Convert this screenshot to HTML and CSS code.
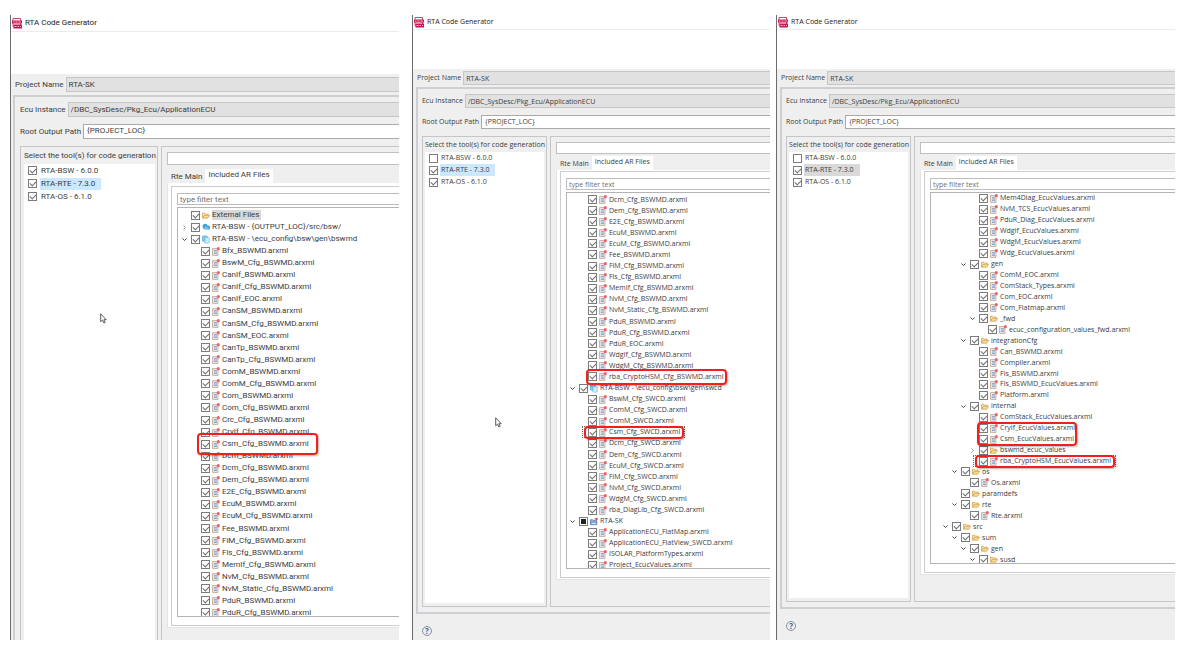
FILE: index.html
```html
<!DOCTYPE html>
<html lang="en">
<head>
<meta charset="utf-8">
<title>RTA Code Generator</title>
<link rel="stylesheet" href="styles.css">
</head>
<body>
<svg class="sprite" aria-hidden="true">
  <symbol id="app" viewBox="0 0 10 11"><path d="M1 .500h7.500v8h-7.500z" fill="#fff" stroke="#c9446f"/><path d="M0 2.500h10v3h-10zM1.500 6.500h8.500v4h-8.500z" fill="#c2184f"/><path d="M1 4h1.500M3.500 4h2M6.500 4h2.500M2.500 8.500h2M5.500 8.500h1.500M8 8.500h1" stroke="#f7cfdc" stroke-width=".9"/></symbol>
  <symbol id="file" viewBox="0 0 8 9"><path d="M.5 1.500h5.500v7h-5.500z" fill="#dfe3ec" stroke="#c4ab8c" stroke-width=".8"/><path d="M2 3.500h3M2 5h3M2 6.500h3" stroke="#7f9bcb" stroke-width=".8"/><path d="M4.500 4l2.500-3" stroke="#e99" stroke-width="1"/><circle cx="6.300" cy="1.700" r="1.600" fill="#f4606a"/></symbol>
  <symbol id="folder" viewBox="0 0 9 9"><path d="M.5 7.500v-5.500h2.500l1 1h3v1.500" fill="#f8e2ae" stroke="#d19a45" stroke-width=".8"/><path d="M.7 7.500l1.800-3.200h6l-2 3.200z" fill="#fbdc90" stroke="#d19a45" stroke-width=".8"/></symbol>
  <symbol id="cloud" viewBox="0 0 9 9"><path d="M.8 4a2.800 2.800 0 0 1 5.400-1.600a2.300 2.300 0 0 1 1.800 4.400h-4.500a3 3 0 0 1-2.700-2.800z" fill="#3ea2dc"/><path d="M2.500 5h5M4 3.500l1 3" stroke="#bfe4f7" stroke-width=".7"/></symbol>
  <symbol id="stack" viewBox="0 0 9 9"><rect x=".5" y=".5" width="5.500" height="6" rx="1" fill="#8fcbee" stroke="#45a7dd" stroke-width=".7"/><rect x="3" y="2.500" width="5.200" height="6" rx="1" fill="#d7effb" stroke="#5bb3e2" stroke-width=".7"/><path d="M1.500 2l3 4" stroke="#45a7dd" stroke-width=".7"/></symbol>
  <symbol id="project" viewBox="0 0 9 9"><path d="M.5 8v-5.500h2.500l1 1h3.500v4.500z" fill="#8fb4e6" stroke="#3d6cb5" stroke-width=".8"/><path d="M1.500 5.500h6.500l-1 2.500h-6z" fill="#dce9fa" stroke="#3d6cb5" stroke-width=".6"/><path d="M4 1.500h2" stroke="#e0a040"/><circle cx="7.300" cy="1.700" r="1.500" fill="#f0505a"/></symbol>
  <symbol id="open" viewBox="0 0 7 7"><path d="M1.500 2.500l2 2l2-2" fill="none" stroke="#444" stroke-width="1"/></symbol>
  <symbol id="closed" viewBox="0 0 7 7"><path d="M2.500 1.500l2 2l-2 2" fill="none" stroke="#999" stroke-width="1"/></symbol>
  <symbol id="pointer" viewBox="0 0 7 11"><path d="M.7.800v8l1.900-1.700l1.300 2.900l1.300-.6l-1.300-2.700h2.300z" fill="#fff" stroke="#334" stroke-width=".8"/></symbol>
</svg>

<main class="desk">
  <section class="window window-a">
    <header class="title"><svg><use href="#app"/></svg><h1>RTA Code Generator</h1></header>
    <div class="banner"></div>
    <div class="form">
      <div class="field project"><label for="a-project">Project Name</label><input id="a-project" type="text" value="RTA-SK" readonly></div>
      <div class="box">
        <div class="field"><label for="a-ecu">Ecu Instance</label><input id="a-ecu" type="text" value="/DBC_SysDesc/Pkg_Ecu/ApplicationECU" readonly></div>
        <div class="field root"><label for="a-root">Root Output Path</label><input id="a-root" type="text" value="{PROJECT_LOC}"></div>
        <div class="columns">
          <div class="group tools">
            <h2>Select the tool(s) for code generation</h2>
            <ul class="tool-list">
              <li><label><input type="checkbox" checked><span>RTA-BSW - 6.0.0</span></label></li>
              <li><label><input type="checkbox" checked><span class="active">RTA-RTE - 7.3.0</span></label></li>
              <li><label><input type="checkbox" checked><span>RTA-OS - 6.1.0</span></label></li>
            </ul>
          </div>
          <div class="group settings">
            <input class="message" type="text" aria-label="Message" readonly>
            <div class="tabs"><button type="button">Rte Main</button><button type="button" class="selected">Included AR Files</button></div>
            <div class="page"><div class="page-inner">
              <input class="filter" type="text" placeholder="type filter text" aria-label="Filter">
              <div class="tree-frame"><ul class="tree" id="tree-a"></ul></div>
            </div></div>
          </div>
        </div>
      </div>
    </div>
    <svg class="pointer"><use href="#pointer"/></svg>
  </section>

  <section class="window window-b">
    <header class="title"><svg><use href="#app"/></svg><h1>RTA Code Generator</h1></header>
    <div class="banner"></div>
    <div class="form">
      <div class="field project"><label for="b-project">Project Name</label><input id="b-project" type="text" value="RTA-SK" readonly></div>
      <div class="box">
        <div class="field"><label for="b-ecu">Ecu Instance</label><input id="b-ecu" type="text" value="/DBC_SysDesc/Pkg_Ecu/ApplicationECU" readonly></div>
        <div class="field root"><label for="b-root">Root Output Path</label><input id="b-root" type="text" value="{PROJECT_LOC}"></div>
        <div class="columns">
          <div class="group tools">
            <h2>Select the tool(s) for code generation</h2>
            <ul class="tool-list">
              <li><label><input type="checkbox"><span>RTA-BSW - 6.0.0</span></label></li>
              <li><label><input type="checkbox" checked><span class="active">RTA-RTE - 7.3.0</span></label></li>
              <li><label><input type="checkbox" checked><span>RTA-OS - 6.1.0</span></label></li>
            </ul>
          </div>
          <div class="group settings">
            <input class="message" type="text" aria-label="Message" readonly>
            <div class="tabs"><button type="button">Rte Main</button><button type="button" class="selected">Included AR Files</button></div>
            <div class="page"><div class="page-inner">
              <input class="filter" type="text" placeholder="type filter text" aria-label="Filter">
              <div class="tree-frame"><ul class="tree" id="tree-b"></ul></div>
            </div></div>
          </div>
        </div>
      </div>
      <div class="footer"><button type="button" class="help" aria-label="Help">?</button></div>
    </div>
    <svg class="pointer"><use href="#pointer"/></svg>
  </section>

  <section class="window window-c">
    <header class="title"><svg><use href="#app"/></svg><h1>RTA Code Generator</h1></header>
    <div class="banner"></div>
    <div class="form">
      <div class="field project"><label for="c-project">Project Name</label><input id="c-project" type="text" value="RTA-SK" readonly></div>
      <div class="box">
        <div class="field"><label for="c-ecu">Ecu Instance</label><input id="c-ecu" type="text" value="/DBC_SysDesc/Pkg_Ecu/ApplicationECU" readonly></div>
        <div class="field root"><label for="c-root">Root Output Path</label><input id="c-root" type="text" value="{PROJECT_LOC}"></div>
        <div class="columns">
          <div class="group tools">
            <h2>Select the tool(s) for code generation</h2>
            <ul class="tool-list">
              <li><label><input type="checkbox"><span>RTA-BSW - 6.0.0</span></label></li>
              <li><label><input type="checkbox" checked><span class="active">RTA-RTE - 7.3.0</span></label></li>
              <li><label><input type="checkbox" checked><span>RTA-OS - 6.1.0</span></label></li>
            </ul>
          </div>
          <div class="group settings">
            <input class="message" type="text" aria-label="Message" readonly>
            <div class="tabs"><button type="button">Rte Main</button><button type="button" class="selected">Included AR Files</button></div>
            <div class="page"><div class="page-inner">
              <input class="filter" type="text" placeholder="type filter text" aria-label="Filter">
              <div class="tree-frame"><ul class="tree" id="tree-c"></ul></div>
            </div></div>
          </div>
        </div>
      </div>
      <div class="footer"><button type="button" class="help" aria-label="Help">?</button></div>
    </div>
  </section>
</main>
<script src="tree.js"></script>
</body>
</html>
```

FILE: tree.js
```js
// Row notation: [depth, icon, flags, name].
// Flags: + expanded, > collapsed, # partly checked, g grey label,
//        ! callout, w wide callout, n slim callout, 2 callout over two rows, f focus.
const files = (depth, suffix, names) =>
  names.split(" ").map(name => [depth, "file", "", name + suffix + ".arxml"]);

const trees = {
  "tree-a": [
    [0, "folder", "g", "External Files"],
    [0, "cloud", ">", "RTA-BSW - {OUTPUT_LOC}/src/bsw/"],
    [0, "stack", "+", "RTA-BSW - \\ecu_config\\bsw\\gen\\bswmd"],
    ...files(1, "", "Bfx_BSWMD BswM_Cfg_BSWMD CanIf_BSWMD CanIf_Cfg_BSWMD CanIf_EOC CanSM_BSWMD CanSM_Cfg_BSWMD CanSM_EOC CanTp_BSWMD CanTp_Cfg_BSWMD ComM_BSWMD ComM_Cfg_BSWMD Com_BSWMD Com_Cfg_BSWMD Crc_Cfg_BSWMD CryIf_Cfg_BSWMD"),
    [1, "file", "w", "Csm_Cfg_BSWMD.arxml"],
    ...files(1, "_BSWMD", "Dcm Dcm_Cfg Dem_Cfg E2E_Cfg EcuM EcuM_Cfg Fee FiM_Cfg Fls_Cfg MemIf_Cfg NvM_Cfg NvM_Static_Cfg PduR PduR_Cfg")
  ],
  "tree-b": [
    ...files(1, "", "Dcm_Cfg_BSWMD Dem_Cfg_BSWMD E2E_Cfg_BSWMD EcuM_BSWMD EcuM_Cfg_BSWMD Fee_BSWMD FiM_Cfg_BSWMD Fls_Cfg_BSWMD MemIf_Cfg_BSWMD NvM_Cfg_BSWMD NvM_Static_Cfg_BSWMD PduR_BSWMD PduR_Cfg_BSWMD PduR_EOC WdgIf_Cfg_BSWMD WdgM_Cfg_BSWMD"),
    [1, "file", "!", "rba_CryptoHSM_Cfg_BSWMD.arxml"],
    [0, "stack", "+", "RTA-BSW - \\ecu_config\\bsw\\gen\\swcd"],
    ...files(1, "_SWCD", "BswM_Cfg ComM_Cfg ComM"),
    [1, "file", "nf", "Csm_Cfg_SWCD.arxml"],
    ...files(1, "_SWCD", "Dcm_Cfg Dem_Cfg EcuM_Cfg FiM_Cfg NvM_Cfg WdgM_Cfg rba_DiagLib_Cfg"),
    [0, "project", "+#", "RTA-SK"],
    ...files(1, "", "ApplicationECU_FlatMap ApplicationECU_FlatView_SWCD ISOLAR_PlatformTypes Project_EcucValues")
  ],
  "tree-c": [
    ...files(4, "_EcucValues", "Mem4Diag NvM_TCS PduR_Diag WdgIf WdgM Wdg"),
    [3, "folder", "+", "gen"],
    ...files(4, "", "ComM_EOC ComStack_Types Com_EOC Com_Flatmap"),
    [4, "folder", "+", "_fwd"],
    [5, "file", "", "ecuc_configuration_values_fwd.arxml"],
    [3, "folder", "+", "integrationCfg"],
    ...files(4, "", "Can_BSWMD Compiler Fls_BSWMD Fls_BSWMD_EcucValues Platform"),
    [3, "folder", "+", "internal"],
    [4, "file", "", "ComStack_EcucValues.arxml"],
    [4, "file", "2", "CryIf_EcucValues.arxml"],
    [4, "file", "", "Csm_EcucValues.arxml"],
    [4, "folder", ">", "bswmd_ecuc_values"],
    [4, "file", "nf", "rba_CryptoHSM_EcucValues.arxml"],
    [2, "folder", "+", "os"],
    [3, "file", "", "Os.arxml"],
    [2, "folder", "", "paramdefs"],
    [2, "folder", "+", "rte"],
    [3, "file", "", "Rte.arxml"],
    [1, "folder", "+", "src"],
    [2, "folder", "+", "sum"],
    [3, "folder", "+", "gen"],
    [4, "folder", "+", "susd"]
  ]
};

const callouts = { "!": "callout", w: "callout wide", n: "callout slim", 2: "callout double", f: "focus" };

function row([depth, icon, flags, name]) {
  const has = flag => flags.includes(flag);
  const arrow = has("+") ? "open" : has(">") ? "closed" : "";
  const twisty = arrow
    ? `<button type="button" class="twisty" aria-label="Toggle ${name}"><svg><use href="#${arrow}"/></svg></button>`
    : `<span class="twisty"></span>`;
  const marks = Object.keys(callouts).filter(has).map(f => `<i class="${callouts[f]}"></i>`).join("");
  return `<li class="depth-${depth}">${twisty}<label><input type="checkbox" ${has("#") ? 'class="partial"' : "checked"}>` +
    `<svg class="icon"><use href="#${icon}"/></svg><span${has("g") ? ' class="grey"' : ""}>${name}</span>${marks}</label></li>`;
}

for (const [id, rows] of Object.entries(trees)) {
  document.getElementById(id).innerHTML = rows.map(row).join("");
}
```

FILE: styles.css
```css
* { box-sizing: border-box; }
body, h1, h2, ul { margin: 0; padding: 0; font-weight: 400; }
ul { list-style: none; }
body {
  background: #fff;
  color: #3c3c3c;
  font-family: "Open Sans", "Noto Sans", sans-serif;
  font-size: 8px;
  line-height: 10px;
}
input, button { font: inherit; color: inherit; margin: 0; padding: 0; border: 0; border-radius: 0; }
button { background: none; }
h1, h2 { font-size: inherit; white-space: nowrap; }
.sprite { display: none; }

.desk { display: flex; height: 100vh; padding: 15px 24px 17px 10px; }
.window {
  --indent: 9px;
  position: relative;
  display: flex;
  flex-direction: column;
  min-width: 0;
  overflow: hidden;
  border-left: 1px solid #6c6c6c;
}
.window-a { --indent: 10px; flex: 389 1 0; margin-right: 13px; font-family: Roboto, "Open Sans", sans-serif; }
.window-b { flex: 358 1 0; margin-right: 6px; font-size: 7px; }
.window-c { flex: 399 1 0; font-size: 7px; }

.title { display: flex; align-items: center; gap: 3px; height: 15px; padding-left: 1px; border-bottom: 1px solid #ececec; color: #222; }
.title svg { width: 10px; height: 11px; }
.window-a .title { height: 17px; }
.banner { height: 39px; }
.window-a .banner { height: 42px; }

.form { display: flex; flex: 1; flex-direction: column; min-height: 0; background: #efefef; }
.field { display: flex; align-items: center; gap: 2px; white-space: nowrap; }
.field input { flex: 1; min-width: 0; height: 14px; padding: 0 2px; border: 1px solid #c6c6c6; border-right: 0; background: #e1e1e1; }
.window-a .field input { height: 15px; }
.project { padding: 2px 0 2px 4px; }
.window-a .project { padding: 3px 0 3px 4px; }
.root { margin-top: 7px; }
.field.root input { padding: 0 3px 2px; background: #fff; border-color: #aaa; }

.box { display: flex; flex: 1; flex-direction: column; min-height: 0; margin-left: 3px; padding: 5px 0 5px 4px; border: 2px solid #cfcfd3; border-right: 0; }
.window-a .box { padding-bottom: 0; border-bottom: 0; margin-left: 2px; padding-left: 5px; }
.columns { display: flex; flex: 1; gap: 3px; min-height: 0; margin-top: 7px; }
.group { border: 1px solid #c6c6c6; }
.tools { display: flex; flex: none; flex-direction: column; width: 125px; padding: 3px 2px 3px 2px; }
.tools h2 { height: 12px; }
.window-a .tools { width: 138px; padding: 4px 2px 0 3px; border-bottom: 0; }
.window-a .tools h2 { height: 13px; }
.tool-list { flex: 1; background: #fff; }
.tool-list label { display: flex; align-items: center; height: 12px; padding-left: 4px; gap: 2px; }
.window-a .tool-list label { height: 13px; gap: 3px; }
.tool-list span { padding: 0 6px 0 1px; line-height: 12px; }
.tool-list .active { background: #cce8ff; }
.window-c .tool-list .active { background: #d9d9d9; }

input[type="checkbox"] { appearance: none; flex: none; width: 9px; height: 9px; border: 1px solid #7c7c7c; background: #fff; }
input[type="checkbox"]:checked::before { content: ""; display: block; width: 5px; height: 3px; margin: 1px 0 0 1px; border: solid #707070; border-width: 0 0 1px 1px; transform: rotate(-45deg); }
input.partial::before { content: ""; display: block; width: 5px; height: 5px; margin: 1px; background: #222; }

.settings { display: flex; flex: 1; flex-direction: column; min-width: 0; padding: 5px 0 26px 5px; border-right: 0; }
.window-a .settings { padding-bottom: 12px; border-bottom: 0; }
.message { flex: none; height: 12px; border: 1px solid #c0c0c0; border-right: 0; background: #fff; }
.window-a .message { height: 13px; }
.tabs { display: flex; align-items: flex-end; height: 16px; padding-left: 1px; }
.window-a .tabs { height: 18px; }
.tabs button { height: 12px; padding: 0 3px; white-space: nowrap; }
.tabs .selected { height: 14px; padding: 0 3px 2px; background: #fff; }
.page { display: flex; flex: 1; min-height: 0; padding: 1px 0 1px 3px; background: #fff; border: 1px solid #e4e4e4; border-width: 0 0 1px 1px; }
.page-inner { display: flex; flex: 1; flex-direction: column; min-width: 0; padding: 6px 0 8px 5px; border: 1px solid #cdcdd0; border-right: 0; }
.window-a .page { padding-top: 3px; }
.filter { flex: none; height: 12px; padding: 0 2px; border: 1px solid #bdbdbd; border-right: 0; background: #fff; }
.filter::placeholder { color: #707070; opacity: 1; }
.tree-frame { display: flex; flex: 1; flex-direction: column; min-height: 0; margin-top: 2px; overflow: hidden; border: 1px solid #b4b4b8; border-right: 0; }
.tree { display: grid; flex: 1; grid-auto-rows: 1fr; margin: 1px 0 -3px; }
.window-c .tree { margin: 0 0 -2px; }
.tree li { display: flex; align-items: center; min-height: 0; white-space: nowrap; }
.tree label { position: relative; display: flex; align-items: center; }
.twisty { display: flex; flex: none; align-items: center; width: 8px; margin: 0 2px; }
.window-a .twisty { margin-left: 3px; }
.twisty svg { width: 7px; height: 7px; }
.icon { flex: none; width: 8px; height: 9px; margin: 0 2px; }
.grey { background: #d9d9d9; padding-right: 2px; }
.depth-1 { padding-left: var(--indent); }
.depth-2 { padding-left: calc(2 * var(--indent)); }
.depth-3 { padding-left: calc(3 * var(--indent)); }
.depth-4 { padding-left: calc(4 * var(--indent)); }
.depth-5 { padding-left: calc(5 * var(--indent)); }

.callout, .focus { position: absolute; inset: -3px -3px -3px -2px; z-index: 1; pointer-events: none; }
.callout { border: 2px solid #f0201c; border-radius: 4px; box-shadow: 1px 1px 2px rgba(0, 0, 0, .3); }
.wide { inset: -6px -9px -6px -4px; }
.slim { inset: -1px -4px -2px -4px; }
.double { inset: -1px -2px -13px -2px; }
.focus { inset: -1px -5px -1px -6px; border: 1px dotted #666; z-index: 0; }

.footer { flex: none; padding: 12px 0 4px 9px; }
.help { display: block; width: 10px; height: 10px; border: 1px solid #8290ab; border-radius: 50%; color: #4e6083; font-size: 8px; font-weight: 700; line-height: 8px; }
.window-c .footer { padding-bottom: 9px; }
.pointer { position: absolute; width: 7px; height: 11px; }
.window-a .pointer { left: 23%; top: 298px; }
.window-b .pointer { left: 23%; top: 402px; }
```
